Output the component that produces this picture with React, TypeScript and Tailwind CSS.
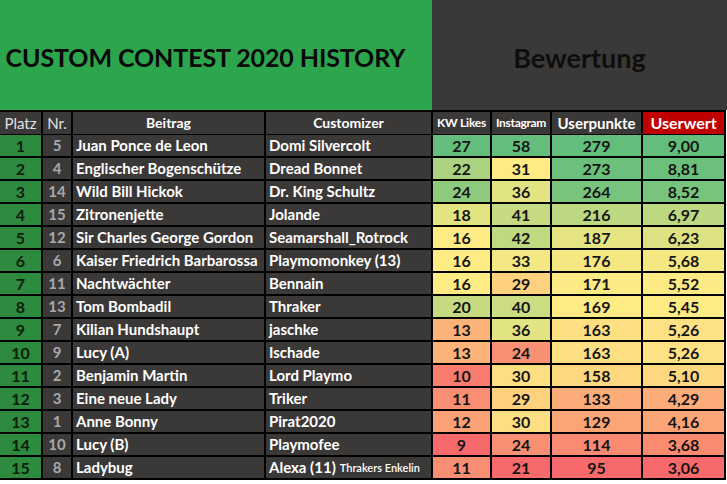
type Row = {
  platz: number;
  nr: number;
  beitrag: string;
  customizer: string;
  note?: string;
  kw: number;
  insta: number;
  punkte: number;
  wert: number;
};

const rows: Row[] = [
  { platz: 1, nr: 5, beitrag: 'Juan Ponce de Leon', customizer: 'Domi Silvercolt', kw: 27, insta: 58, punkte: 279, wert: 9.0 },
  { platz: 2, nr: 4, beitrag: 'Englischer Bogenschütze', customizer: 'Dread Bonnet', kw: 22, insta: 31, punkte: 273, wert: 8.81 },
  { platz: 3, nr: 14, beitrag: 'Wild Bill Hickok', customizer: 'Dr. King Schultz', kw: 24, insta: 36, punkte: 264, wert: 8.52 },
  { platz: 4, nr: 15, beitrag: 'Zitronenjette', customizer: 'Jolande', kw: 18, insta: 41, punkte: 216, wert: 6.97 },
  { platz: 5, nr: 12, beitrag: 'Sir Charles George Gordon', customizer: 'Seamarshall_Rotrock', kw: 16, insta: 42, punkte: 187, wert: 6.23 },
  { platz: 6, nr: 6, beitrag: 'Kaiser Friedrich Barbarossa', customizer: 'Playmomonkey (13)', kw: 16, insta: 33, punkte: 176, wert: 5.68 },
  { platz: 7, nr: 11, beitrag: 'Nachtwächter', customizer: 'Bennain', kw: 16, insta: 29, punkte: 171, wert: 5.52 },
  { platz: 8, nr: 13, beitrag: 'Tom Bombadil', customizer: 'Thraker', kw: 20, insta: 40, punkte: 169, wert: 5.45 },
  { platz: 9, nr: 7, beitrag: 'Kilian Hundshaupt', customizer: 'jaschke', kw: 13, insta: 36, punkte: 163, wert: 5.26 },
  { platz: 10, nr: 9, beitrag: 'Lucy (A)', customizer: 'Ischade', kw: 13, insta: 24, punkte: 163, wert: 5.26 },
  { platz: 11, nr: 2, beitrag: 'Benjamin Martin', customizer: 'Lord Playmo', kw: 10, insta: 30, punkte: 158, wert: 5.1 },
  { platz: 12, nr: 3, beitrag: 'Eine neue Lady', customizer: 'Triker', kw: 11, insta: 29, punkte: 133, wert: 4.29 },
  { platz: 13, nr: 1, beitrag: 'Anne Bonny', customizer: 'Pirat2020', kw: 12, insta: 30, punkte: 129, wert: 4.16 },
  { platz: 14, nr: 10, beitrag: 'Lucy (B)', customizer: 'Playmofee', kw: 9, insta: 24, punkte: 114, wert: 3.68 },
  { platz: 15, nr: 8, beitrag: 'Ladybug', customizer: 'Alexa (11)', note: 'Thrakers Enkelin', kw: 11, insta: 21, punkte: 95, wert: 3.06 },
];

// excel-style 3 colour scale: red -> yellow (median) -> green
const RED = [248, 105, 107];
const YELLOW = [255, 235, 132];
const GREEN = [99, 190, 123];

function scale(values: number[]) {
  const sorted = [...values].sort((a, b) => a - b);
  const min = sorted[0];
  const max = sorted[sorted.length - 1];
  const mid = sorted[Math.floor(sorted.length / 2)];
  return (v: number) => {
    let from = YELLOW, to = GREEN, t = 0;
    if (v >= mid) {
      t = max === mid ? 0 : (v - mid) / (max - mid);
    } else {
      from = RED;
      to = YELLOW;
      t = (v - min) / (mid - min);
    }
    const c = from.map((f, i) => Math.round(f + (to[i] - f) * t));
    return `rgb(${c[0]}, ${c[1]}, ${c[2]})`;
  };
}

const kwColor = scale(rows.map(r => r.kw));
const instaColor = scale(rows.map(r => r.insta));
const punkteColor = scale(rows.map(r => r.punkte));
const wertColor = scale(rows.map(r => r.wert));

function Num({ value, bg }: { value: string | number; bg: string }) {
  return (
    <div
      className="flex items-center justify-center text-[16px] font-bold text-[#151515]"
      style={{ backgroundColor: bg }}
    >
      {value}
    </div>
  );
}

export default function App() {
  return (
    <div className="w-[727px] h-[484px] bg-white font-['Lato','Liberation_Sans',sans-serif] leading-none overflow-hidden">
      <div className="flex h-[110px]">
        <div className="w-[432px] bg-[#2ca54d] flex items-center justify-center pt-[4px] pr-[21px]">
          <h1 className="text-[25px] font-bold text-[#080808] tracking-[-0.1px]">CUSTOM CONTEST 2020 HISTORY</h1>
        </div>
        <div className="flex-1 bg-[#3b3838] flex items-center justify-center pt-[4px]">
          <h2 className="text-[27px] font-bold text-[#0e0e0e]">Bewertung</h2>
        </div>
      </div>

      <div className="w-[726px] grid grid-cols-[41px_28px_191px_165px_57px_58px_89px_81px] auto-rows-[21px] gap-[2px] bg-black py-[2px] pr-[2px]">
        <div className="h-[22px] bg-[#3b3838] flex items-center justify-center text-[15px] text-[#e2e2e2]">Platz</div>
        <div className="h-[22px] bg-[#3b3838] flex items-center justify-center text-[15px] text-[#e2e2e2]">Nr.</div>
        <div className="h-[22px] bg-[#3b3838] flex items-center justify-center text-[14px] font-bold text-white">Beitrag</div>
        <div className="h-[22px] bg-[#3b3838] flex items-center justify-center text-[14px] font-bold text-white">Customizer</div>
        <div className="h-[22px] bg-[#3b3838] flex items-center justify-center text-[12px] font-bold text-white tracking-[-0.2px]">KW Likes</div>
        <div className="h-[22px] bg-[#3b3838] flex items-center justify-center text-[12px] font-bold text-white tracking-[-0.3px]">Instagram</div>
        <div className="h-[22px] bg-[#3b3838] flex items-center justify-center text-[15px] font-bold text-white">Userpunkte</div>
        <div className="h-[22px] bg-[#c00000] flex items-center justify-center text-[16px] font-bold text-white">Userwert</div>

        {rows.map(r => (
          <div key={r.platz} className="contents">
            <div className="bg-[#2e8a3e] flex items-center justify-center text-[16px] font-bold text-[#0c200e]">{r.platz}</div>
            <div className="bg-[#3b3838] flex items-center justify-center text-[15px] font-bold text-[#a8a8a8]">{r.nr}</div>
            <div className="bg-[#3b3838] flex items-center pl-[3px] text-[15px] font-bold text-white whitespace-nowrap overflow-hidden">{r.beitrag}</div>
            <div className="bg-[#3b3838] flex items-center pl-[3px] text-[15px] font-bold text-white whitespace-nowrap overflow-hidden">
              {r.customizer}
              {r.note && <span className="ml-[4px] text-[11px] font-semibold">{r.note}</span>}
            </div>
            <Num value={r.kw} bg={kwColor(r.kw)} />
            <Num value={r.insta} bg={instaColor(r.insta)} />
            <Num value={r.punkte} bg={punkteColor(r.punkte)} />
            <Num value={r.wert.toFixed(2).replace('.', ',')} bg={wertColor(r.wert)} />
          </div>
        ))}
      </div>
    </div>
  );
}
